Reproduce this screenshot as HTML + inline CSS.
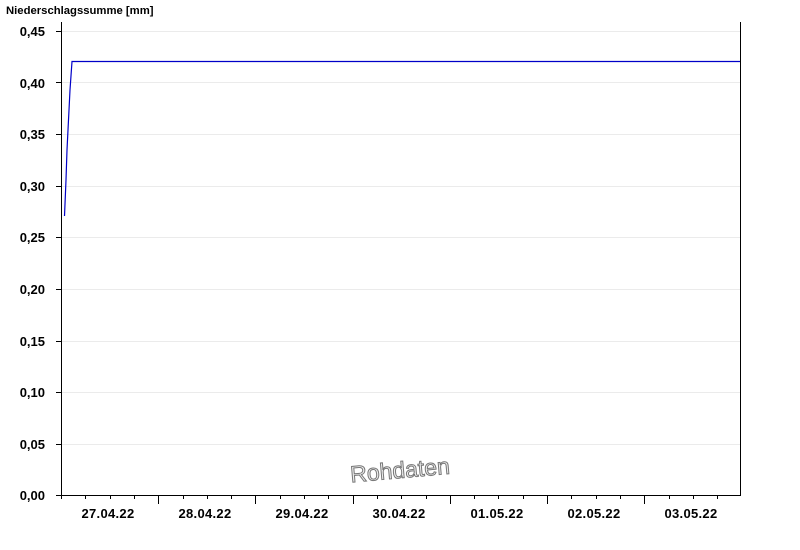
<!DOCTYPE html>
<html><head><meta charset="utf-8"><style>
html,body{margin:0;padding:0;background:#fff;width:800px;height:550px;overflow:hidden}
svg text{font-family:"Liberation Sans",sans-serif;font-weight:bold;font-size:13px;fill:#000}
</style></head><body>
<svg width="800" height="550" xmlns="http://www.w3.org/2000/svg">
<text x="6" y="14" style="font-size:11.3px">Niederschlagssumme [mm]</text>
<g stroke="#ebebeb" stroke-width="1">
<line x1="62" y1="31.5" x2="740" y2="31.5"/>
<line x1="62" y1="82.5" x2="740" y2="82.5"/>
<line x1="62" y1="134.5" x2="740" y2="134.5"/>
<line x1="62" y1="186.5" x2="740" y2="186.5"/>
<line x1="62" y1="237.5" x2="740" y2="237.5"/>
<line x1="62" y1="289.5" x2="740" y2="289.5"/>
<line x1="62" y1="341.5" x2="740" y2="341.5"/>
<line x1="62" y1="392.5" x2="740" y2="392.5"/>
<line x1="62" y1="444.5" x2="740" y2="444.5"/>
</g>
<g stroke="#000" stroke-width="1">
<line x1="61.5" y1="22" x2="61.5" y2="496"/>
<line x1="740.5" y1="22" x2="740.5" y2="496"/>
<line x1="61" y1="495.5" x2="741" y2="495.5"/>
<line x1="56" y1="31.5" x2="61" y2="31.5"/>
<line x1="56" y1="82.5" x2="61" y2="82.5"/>
<line x1="56" y1="134.5" x2="61" y2="134.5"/>
<line x1="56" y1="186.5" x2="61" y2="186.5"/>
<line x1="56" y1="237.5" x2="61" y2="237.5"/>
<line x1="56" y1="289.5" x2="61" y2="289.5"/>
<line x1="56" y1="341.5" x2="61" y2="341.5"/>
<line x1="56" y1="392.5" x2="61" y2="392.5"/>
<line x1="56" y1="444.5" x2="61" y2="444.5"/>
<line x1="56" y1="495.5" x2="61" y2="495.5"/>
</g>
<g text-anchor="end">
<text x="45" y="36">0,45</text><text x="45" y="88">0,40</text><text x="45" y="139">0,35</text>
<text x="45" y="191">0,30</text><text x="45" y="242">0,25</text><text x="45" y="294">0,20</text>
<text x="45" y="346">0,15</text><text x="45" y="397">0,10</text><text x="45" y="449">0,05</text>
<text x="45" y="500">0,00</text>
</g>
<g stroke="#000" stroke-width="1" id="ticks"></g>
<path d="M64.5 216 L66 180 L67 150 L69 110 L70 90 L72 61.5 L740 61.5" fill="none" stroke="#0000c8" stroke-width="1.2"/>
<g text-anchor="middle" style="letter-spacing:0.3px">
<text x="108" y="518">27.04.22</text><text x="205" y="518">28.04.22</text><text x="302" y="518">29.04.22</text>
<text x="399" y="518">30.04.22</text><text x="497" y="518">01.05.22</text><text x="594" y="518">02.05.22</text>
<text x="691" y="518">03.05.22</text>
</g>
<text x="400" y="478" text-anchor="middle" transform="rotate(-5 400 470)" style="font-weight:normal;font-size:23px;fill:#eee;stroke:#777;stroke-width:1">Rohdaten</text>
</svg>
<script>
var g=document.getElementById('ticks');
for(var i=0;i<28;i++){var x=Math.round(61+i*24.3)+0.5;if(x>741)break;var maj=(i%4==0&&i>0);
var l=document.createElementNS('http://www.w3.org/2000/svg','line');
l.setAttribute('x1',x);l.setAttribute('x2',x);l.setAttribute('y1',496);l.setAttribute('y2',maj?504:499);g.appendChild(l);}
</script>
</body></html>
